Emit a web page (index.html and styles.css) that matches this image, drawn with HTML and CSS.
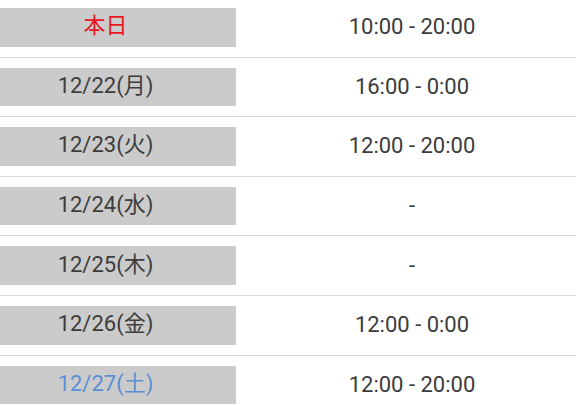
FILE: index.html
```html
<!DOCTYPE html>
<html lang="ja">
<head>
<meta charset="utf-8">
<link rel="stylesheet" href="styles.css">
</head>
<body>
<div class="schedule">
  <div class="row first"><div class="day today">本日</div><div class="hours">10:00 - 20:00</div></div>
  <div class="row"><div class="day">12/22(月)</div><div class="hours">16:00 - 0:00</div></div>
  <div class="row"><div class="day">12/23(火)</div><div class="hours">12:00 - 20:00</div></div>
  <div class="row"><div class="day">12/24(水)</div><div class="hours">-</div></div>
  <div class="row"><div class="day">12/25(木)</div><div class="hours">-</div></div>
  <div class="row"><div class="day">12/26(金)</div><div class="hours">12:00 - 0:00</div></div>
  <div class="row"><div class="day sat">12/27(土)</div><div class="hours">12:00 - 20:00</div></div>
</div>
</body>
</html>
```
FILE: styles.css
```css
html, body {
  margin: 0;
  padding: 0;
  background: #fff;
}
body {
  width: 576px;
  height: 406px;
  overflow: hidden;
  font-family: Roboto, "Noto Sans CJK JP", sans-serif;
  color: #3c3c3c;
}
.schedule {
  display: flex;
  flex-direction: column;
}
.row {
  display: flex;
  align-items: center;
  padding: 10px 0;
  border-bottom: 1.6px solid #dcdcdc;
  height: 38.6px;
}
.row.first {
  padding-top: 8px;
}
.day {
  width: 236px;
  height: 100%;
  box-sizing: border-box;
  padding-right: 25px;
  padding-bottom: 2px;
  background: #cbcbcb;
  display: flex;
  align-items: center;
  justify-content: center;
  font-size: 22px;
  line-height: 1;
}
.day.today { color: #e8161e; }
.day.sat { color: #5b8fd4; }
.hours {
  flex: 1;
  padding-left: 12px;
  text-align: center;
  font-size: 22px;
  line-height: 1;
}
```
